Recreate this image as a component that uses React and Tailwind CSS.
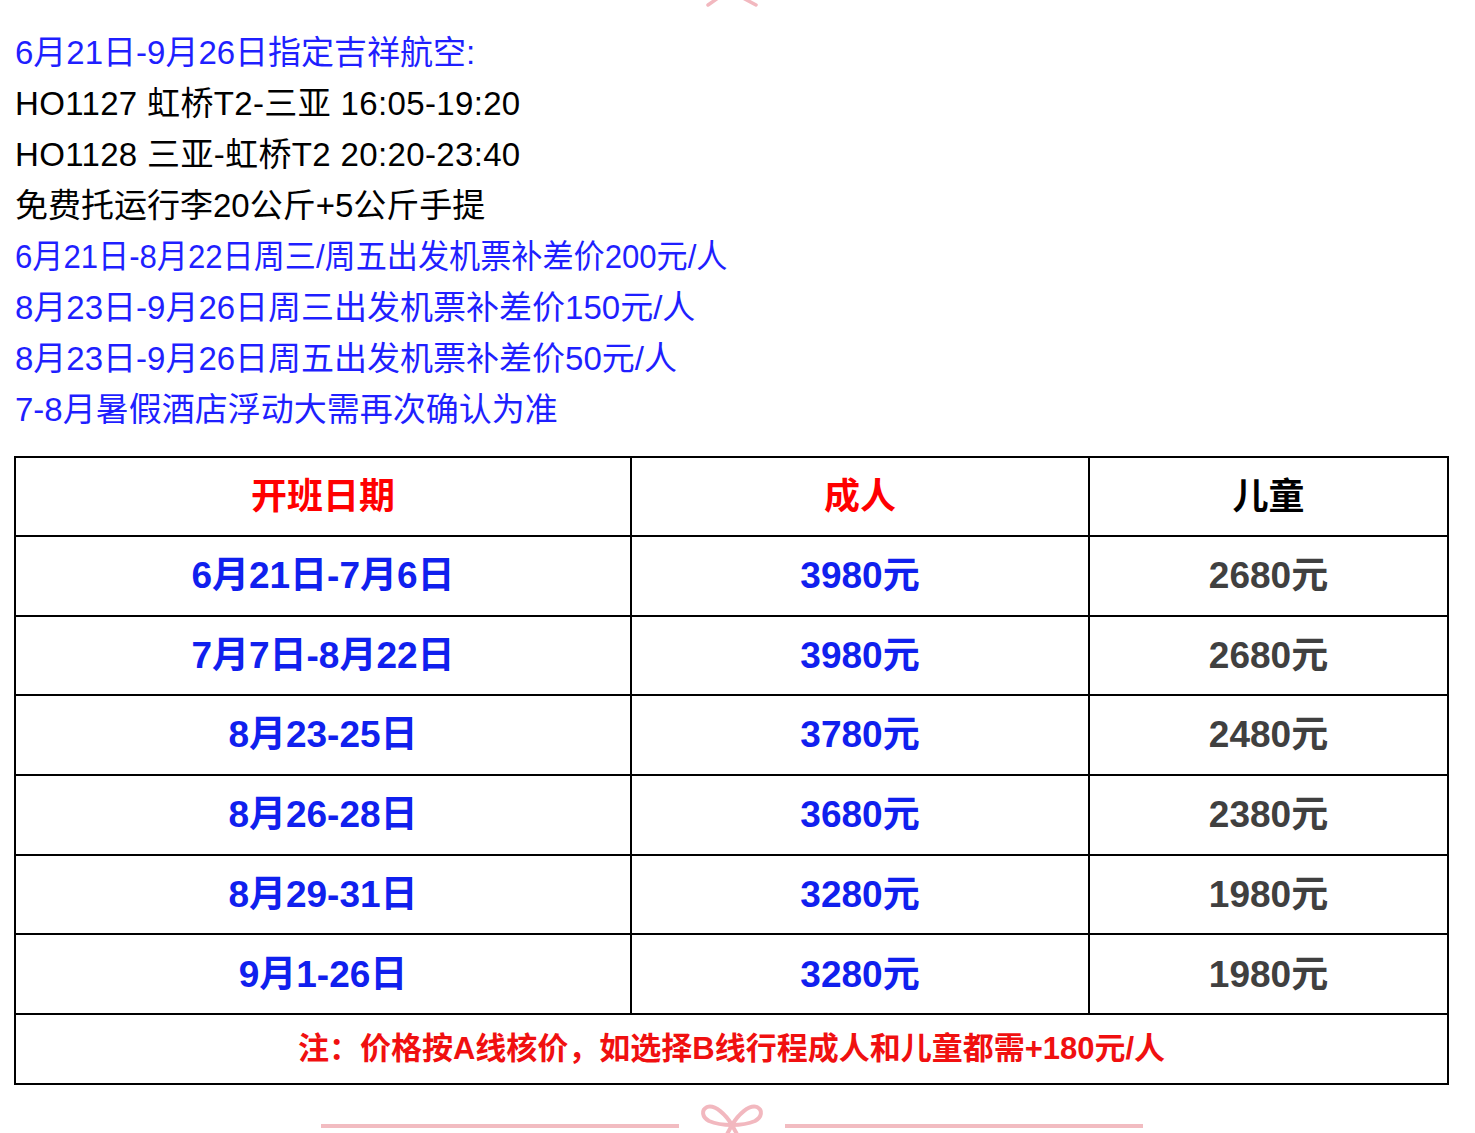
import React from 'react';

const FONT = { fontFamily: '"Liberation Sans", "Noto Sans CJK SC", sans-serif' };

const rows = [
  { date: '6月21日-7月6日', adult: '3980元', child: '2680元' },
  { date: '7月7日-8月22日', adult: '3980元', child: '2680元' },
  { date: '8月23-25日', adult: '3780元', child: '2480元' },
  { date: '8月26-28日', adult: '3680元', child: '2380元' },
  { date: '8月29-31日', adult: '3280元', child: '1980元' },
  { date: '9月1-26日', adult: '3280元', child: '1980元' },
];

const Bow = () => (
  <svg width="66" height="34" viewBox="0 0 66 34" fill="none" stroke="#f2b8bf" strokeWidth="4" strokeLinecap="round">
    <path d="M33 23 C 27 13, 16 2, 8 5 C 2 8, 3 15, 10 19 C 17 22, 27 23, 33 23 Z" />
    <path d="M33 23 C 39 13, 50 2, 58 5 C 64 8, 63 15, 56 19 C 49 22, 39 23, 33 23 Z" />
    <path d="M33 23 L 26 36 M33 23 L 40 36" />
  </svg>
);

export default function App() {
  return (
    <div className="bg-white w-[1475px] h-[1133px] overflow-hidden" style={FONT}>
      <div className="w-[1435px] ml-[14px]">
        <div className="h-[8px] flex justify-center">
          <svg width="54" height="8" viewBox="0 0 54 8" fill="none" stroke="#f2b8bf" strokeWidth="3.5" strokeLinecap="round">
            <path d="M3 5 L 13 -2 M51 5 L 38 -2" />
          </svg>
        </div>
        <div className="mt-[19px] pl-[1px] text-[33px] leading-[51px] text-black">
          <p className="text-[#1f1fff]">6月21日-9月26日指定吉祥航空:</p>
          <p className="tracking-[0.35px]">HO1127 虹桥T2-三亚 16:05-19:20</p>
          <p className="tracking-[0.35px]">HO1128 三亚-虹桥T2 20:20-23:40</p>
          <p>免费托运行李20公斤+5公斤手提</p>
          <p className="text-[#1f1fff] origin-left scale-x-[0.943] whitespace-nowrap">6月21日-8月22日周三/周五出发机票补差价200元/人</p>
          <p className="text-[#1f1fff]">8月23日-9月26日周三出发机票补差价150元/人</p>
          <p className="text-[#1f1fff]">8月23日-9月26日周五出发机票补差价50元/人</p>
          <p className="text-[#1f1fff]">7-8月暑假酒店浮动大需再次确认为准</p>
        </div>

        <div className="mt-[21px] border-2 border-black font-bold text-[37px]">
          <div className="grid grid-cols-[616px_458px_1fr] h-[79px] border-b-2 border-black">
            <div className="flex items-center justify-center border-r-2 border-black text-[#ff0000] text-[36px]">开班日期</div>
            <div className="flex items-center justify-center border-r-2 border-black text-[#ff0000] text-[36px]">成人</div>
            <div className="flex items-center justify-center text-black text-[36px]">儿童</div>
          </div>
          {rows.map((r, i) => (
            <div key={i} className="grid grid-cols-[616px_458px_1fr] h-[79.7px] border-b-2 border-black">
              <div className="flex items-center justify-center border-r-2 border-black text-[#1020ee]">{r.date}</div>
              <div className="flex items-center justify-center border-r-2 border-black text-[#1020ee]">{r.adult}</div>
              <div className="flex items-center justify-center text-[#404040]">{r.child}</div>
            </div>
          ))}
          <div className="h-[68px] flex items-center justify-center text-[31px] text-[#f01010]">
            注：价格按A线核价，如选择B线行程成人和儿童都需+180元/人
          </div>
        </div>

        <div className="mt-[17px] flex items-start justify-center gap-[20px]">
          <div className="w-[358px] h-[4px] bg-[#f2bcc1] mt-[22px]" />
          <Bow />
          <div className="w-[358px] h-[4px] bg-[#f2bcc1] mt-[22px]" />
        </div>
      </div>
    </div>
  );
}
